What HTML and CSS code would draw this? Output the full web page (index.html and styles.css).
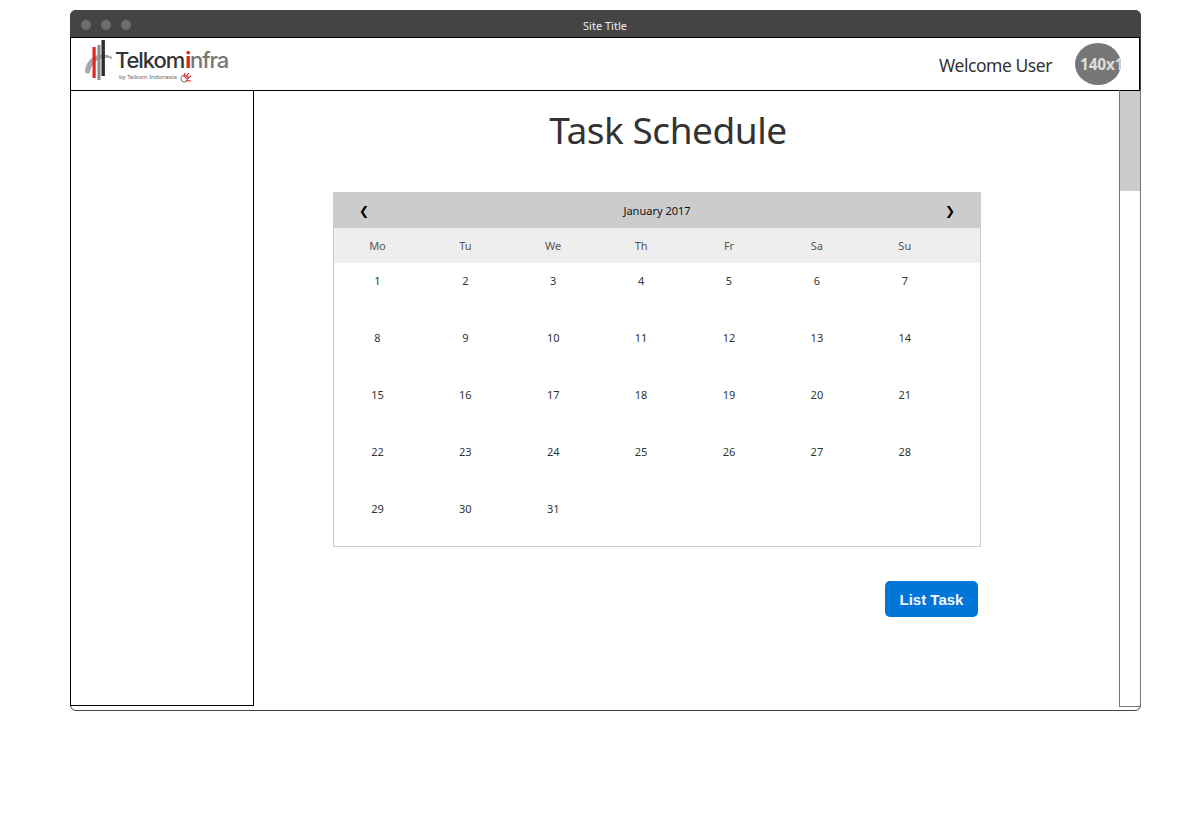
FILE: index.html
```html
<!DOCTYPE html>
<html lang="en">
<head>
<meta charset="utf-8">
<title>Task Schedule</title>
<link rel="stylesheet" href="styles.css">
</head>
<body>
<div class="window">
  <div class="titlebar">
    <div class="dots"><i></i><i></i><i></i></div>
    <div class="site-title">Site Title</div>
  </div>
  <header class="topbar">
    <div class="logo">
      <svg class="logo-mark" width="28" height="42" viewBox="0 0 28 42">
        <path d="M0 32C0 20 13 9 27 17L27 19C17 15 7 21 5 32C4 34 1 34 0 32Z" fill="#a8a8a8"/>
        <rect x="7.500" y="7" width="3.200" height="31" fill="#e2242b"/>
        <rect x="12.500" y="5" width="3" height="35" fill="#8a8a8a"/>
        <rect x="16.500" y="0" width="3.400" height="36" fill="#2d2d2d"/>
      </svg>
      <div class="logo-text">
        <div class="logo-name">Telkom<b>i</b><span>nfra</span></div>
        <div class="logo-sub">by Telkom Indonesia
          <svg width="12" height="11" viewBox="0 0 12 11"><circle cx="4.500" cy="6.500" r="3.500" fill="none" stroke="#777" stroke-width="1"/><path d="M5 6 9 1M6 7l5-3M6 8.500l5 .5M4 5l1-4" stroke="#e2242b" stroke-width="1.200"/></svg>
        </div>
      </div>
    </div>
    <div class="user">
      <span class="welcome">Welcome User</span>
      <div class="avatar"><span>140x140</span></div>
    </div>
  </header>
  <div class="body">
    <aside class="sidebar"></aside>
    <main class="content">
      <h1>Task Schedule</h1>
      <section class="calendar">
        <div class="cal-head"><span class="arrow">❮</span><span class="month">January 2017</span><span class="arrow">❯</span></div>
        <div class="cal-grid weekdays"><span>Mo</span><span>Tu</span><span>We</span><span>Th</span><span>Fr</span><span>Sa</span><span>Su</span></div>
        <div class="cal-grid days">
          <span>1</span><span>2</span><span>3</span><span>4</span><span>5</span><span>6</span><span>7</span>
          <span>8</span><span>9</span><span>10</span><span>11</span><span>12</span><span>13</span><span>14</span>
          <span>15</span><span>16</span><span>17</span><span>18</span><span>19</span><span>20</span><span>21</span>
          <span>22</span><span>23</span><span>24</span><span>25</span><span>26</span><span>27</span><span>28</span>
          <span>29</span><span>30</span><span>31</span>
        </div>
      </section>
      <div class="actions"><button class="btn">List Task</button></div>
    </main>
    <div class="scrollbar"><div class="thumb"></div></div>
  </div>
</div>
</body>
</html>
```
FILE: styles.css
```css
* { box-sizing: border-box; }
html, body { margin: 0; height: 100%; background: #fff; }
body { padding: 10px 0 0 70px; font-family: "Noto Sans", sans-serif; color: #2e2e2e; overflow: hidden; }
.window { width: 1071px; height: 701px; border: 1px solid #444; border-radius: 6px; display: flex; flex-direction: column; }
.titlebar { height: 27px; margin: -1px -1px 0; background: #444; border-radius: 6px 6px 0 0; flex: none; display: flex; align-items: center; position: relative; }
.dots { display: flex; gap: 10px; padding: 3px 0 0 11px; }
.dots i { width: 10px; height: 10px; border-radius: 50%; background: #6e6e6e; }
.site-title { position: absolute; left: 0; right: 1px; top: 8px; text-align: center; color: #eee; font-size: 11px; line-height: 16px; }
.topbar { height: 54px; border: 1px solid #000; margin: 0 0 0 -1px; flex: none; display: flex; justify-content: space-between; align-items: center; background: #fff; }
.logo { display: flex; align-items: center; padding-left: 14px; gap: 2px; }
.logo-mark { margin-bottom: 6px; flex: none; }
.logo-text { padding-top: 2px; }
.logo-name { font-family: "Inter", sans-serif; font-weight: 500; font-size: 22px; letter-spacing: -1.100px; line-height: 24px; color: #333; }
.logo-name b { color: #d9232a; font-weight: 700; padding-left: 1px; }
.logo-name span { color: #777; }
.logo-sub { font-size: 6px; line-height: 11px; color: #666; padding-left: 4px; display: flex; align-items: center; gap: 3px; margin-top: 0; }
.user { display: flex; align-items: center; gap: 23px; padding-right: 18px; }
.welcome { font-size: 17.500px; letter-spacing: -.45px; color: #333; padding-top: 2px; }
.avatar { width: 46px; height: 42px; border-radius: 50%; background: #777; overflow: hidden; color: #ddd; font-weight: 700; font-size: 15.500px; line-height: 42px; padding-left: 5px; white-space: nowrap; letter-spacing: -.2px; }
.body { flex: 1; min-height: 0; display: flex; margin-top: -1px; }
.sidebar { width: 184px; height: 616px; border: 1px solid #000; margin-left: -1px; flex: none; }
.content { flex: 1; padding: 0 0 0 79px; min-width: 0; }
h1 { margin: 14px 0 36px; width: 670px; text-align: center; font-weight: 400; font-size: 37px; line-height: 52px; letter-spacing: -.45px; color: #333; }
.calendar { width: 648px; height: 355px; border: 1px solid #ccc; border-top: 0; }
.cal-head { height: 36px; margin: 0 -1px; background: #ccc; display: flex; justify-content: space-between; align-items: center; padding: 2px 26px 0; }
.arrow { font-size: 12px; color: #000; font-family: "DejaVu Sans", sans-serif; }
.month { font-size: 11px; color: #111; padding-bottom: 2px; }
.cal-grid { display: grid; grid-template-columns: repeat(7, 87.900px); font-size: 11px; text-align: center; }
.cal-grid span { padding-right: 1px; }
.weekdays { height: 35px; background: #eee; line-height: 35px; color: #555; }
.days { grid-auto-rows: 57px; line-height: 36px; color: #333; }
.actions { width: 645px; display: flex; justify-content: flex-end; margin-top: 34px; }
.btn { width: 93px; height: 36px; border: 0; border-radius: 5px; background: #0275d8; color: #f4f8fc; font-family: "Liberation Sans", sans-serif; font-weight: 700; font-size: 15px; padding: 0; }
.scrollbar { width: 22px; height: 617px; border: 1px solid #777; border-top: 0; flex: none; margin-right: -1px; }
.thumb { height: 100px; margin-top: 1px; background: #ccc; }
```
